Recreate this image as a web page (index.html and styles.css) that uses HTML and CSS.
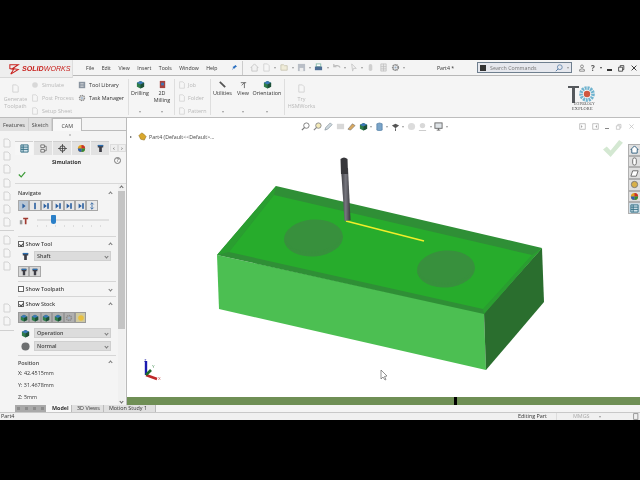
FILE: index.html
```html
<!DOCTYPE html>
<html lang="en">
<head>
<meta charset="utf-8">
<title>SOLIDWORKS CAM Simulation</title>
<link rel="stylesheet" href="styles.css">
</head>
<body>
<svg class="defs" width="0" height="0">
  <symbol id="page" viewBox="0 0 10 10"><path d="M2 1h4l2 2v6H2z" fill="#f6f6f6" stroke="#d2d2d2"/></symbol>
  <symbol id="gear" viewBox="0 0 10 10"><circle cx="5" cy="5" r="3" fill="none" stroke="#8a8a8a" stroke-width="2" stroke-dasharray="1.500 .6"/><circle cx="5" cy="5" r="1.200" fill="#9ab0c8"/></symbol>
  <symbol id="cube" viewBox="0 0 10 10"><path d="M5 1l4 2v4.500L5 9.500 1 7.500V3z" fill="#2f7d4a"/><path d="M5 1l4 2-4 2-4-2z" fill="#3c78b8"/><path d="M5 5l4-2v4.500L5 9.500z" fill="#1e4f38"/></symbol>
  <symbol id="navb" viewBox="0 0 10 10"><path d="M2 2l4 3-4 3z" fill="#2a5fa0"/><rect x="6.500" y="1.500" width="2" height="7" fill="#2a5fa0"/></symbol>
  <symbol id="tool" viewBox="0 0 10 10"><path d="M2 1h6v3H6.500v5h-3V4H2z" fill="#3d3d45"/><path d="M2 1h6v1.500H2z" fill="#2c6fb0"/></symbol>
  <symbol id="ball" viewBox="0 0 10 10"><circle cx="5" cy="5" r="4" fill="#e0a020"/><path d="M5 1a4 4 0 0 1 4 4H5z" fill="#c8302a"/><path d="M5 5h4a4 4 0 0 1-4 4z" fill="#2f8a3c"/><path d="M5 5v4a4 4 0 0 1-4-4z" fill="#2c5fb0"/></symbol>
</svg>
<div class="app">
  <header class="titlebar">
    <div class="logo"><svg class="logo-mark" viewBox="0 0 14 14"><path d="M2 3h9L5 7l6 1-8 5 3-5-4-1z" fill="none" stroke="#c8201c" stroke-width="1.100"/></svg><span class="logo-solid">SOLID</span><span class="logo-works">WORKS</span></div>
    <nav class="menu"><span>File</span><span>Edit</span><span>View</span><span>Insert</span><span>Tools</span><span>Window</span><span>Help</span><svg class="pin" viewBox="0 0 8 8"><path d="M6 0l2 2-2 1-1 2-1-1-3 3 2-3.500-1-1 2-1z" fill="#2a6fc0"/></svg></nav>
    <div class="quick">
      <svg class="qi" viewBox="0 0 10 10"><path d="M1 5l4-4 4 4H8v4H2V5z" fill="#f2f2f2" stroke="#c6c6c6"/></svg>
      <svg class="qi"><use href="#page"/></svg><i class="drop"></i>
      <svg class="qi" viewBox="0 0 10 10"><path d="M1 8V2h3l1 1h3v5z" fill="#f0ecd8" stroke="#c9c6b4"/></svg><i class="drop"></i>
      <svg class="qi" viewBox="0 0 10 10"><rect x="1" y="1" width="8" height="8" fill="#b9bec6"/><rect x="3" y="5.500" width="4" height="3.500" fill="#eee"/></svg><i class="drop"></i>
      <svg class="qi" viewBox="0 0 10 10"><rect x="2.500" y="1" width="5" height="3" fill="#fff" stroke="#8ba"/><rect x="1" y="4" width="8" height="4" fill="#4d6d94"/></svg><i class="drop"></i>
      <svg class="qi" viewBox="0 0 10 10"><path d="M2 4a4 3 0 0 1 7 1M2 1v3h3" fill="none" stroke="#bcbcbc" stroke-width="1.300"/></svg><i class="drop"></i>
      <svg class="qi" viewBox="0 0 10 10"><path d="M3 1l5 5H5l-1 3z" fill="#f4f4f4" stroke="#c6c6c6"/></svg><i class="drop"></i>
      <svg class="qi" viewBox="0 0 10 10"><rect x="3" y="1" width="4" height="8" rx="2" fill="#cfcfcf"/></svg>
      <svg class="qi" viewBox="0 0 10 10"><path d="M2 1h6v8H2zM2 4h6M2 6.500h6M5 1v8" fill="#e8e8e8" stroke="#bdbdbd" stroke-width=".8"/></svg>
      <svg class="qi"><use href="#gear"/></svg><i class="drop"></i>
    </div>
    <span class="docname">Part4 *</span>
    <div class="search"><span class="search-icon"></span><span class="search-text">Search Commands</span><svg class="lens" viewBox="0 0 10 10"><circle cx="6" cy="4" r="3" fill="none" stroke="#5b7fa8"/><path d="M4 6L1 9" stroke="#5b7fa8" stroke-width="1.200"/></svg><i class="drop"></i></div>
    <div class="winctl">
      <svg class="wi" viewBox="0 0 10 10"><circle cx="5" cy="3" r="1.800" fill="none" stroke="#777"/><path d="M2 9V7q3-2 6 0v2z" fill="none" stroke="#777"/></svg>
      <span class="help">?</span><i class="drop dark"></i>
      <span class="dash"></span>
      <svg class="wi" viewBox="0 0 10 10"><path d="M2 4h5v5H2zM4 4V2h4.500v5H7" fill="none" stroke="#333"/></svg>
      <svg class="wi" viewBox="0 0 10 10"><path d="M2 2l6 6M8 2l-6 6" stroke="#333" stroke-width="1.200"/></svg>
    </div>
  </header>

  <section class="ribbon">
    <div class="rb-group g-gen">
      <div class="rb-big off"><svg class="rb-ico"><use href="#page"/></svg><span>Generate<br>Toolpath</span></div>
      <div class="rb-list l-sim off">
        <span><svg class="ri" viewBox="0 0 10 10"><circle cx="5" cy="5" r="3.500" fill="#d8d8d8"/></svg>Simulate</span>
        <span><svg class="ri"><use href="#page"/></svg>Post Process</span>
        <span><svg class="ri"><use href="#page"/></svg>Setup Sheet</span>
      </div>
      <div class="rb-list l-lib">
        <span><svg class="ri" viewBox="0 0 10 10"><path d="M1 1h8v8H1z" fill="#8a94a0"/><path d="M3 3h4v1H3zM3 6h4v1H3z" fill="#eee"/></svg>Tool Library</span>
        <span><svg class="ri"><use href="#gear"/></svg>Task Manager</span>
      </div>
    </div>
    <div class="rb-group g-op">
      <div class="rb-tall w22"><svg class="rb-ico"><use href="#cube"/></svg><span>Drilling</span><i class="drop"></i></div>
      <div class="rb-tall w22"><svg class="rb-ico" viewBox="0 0 10 10"><path d="M2 1h6v8H2z" fill="#a8423e"/><path d="M3.500 3h3v3h-3z" fill="#3c78b8"/></svg><span>2D<br>Milling</span><i class="drop"></i></div>
    </div>
    <div class="rb-group g-job">
      <div class="rb-list l-job off">
        <span><svg class="ri"><use href="#page"/></svg>Job</span>
        <span><svg class="ri"><use href="#page"/></svg>Folder</span>
        <span><svg class="ri"><use href="#page"/></svg>Pattern</span>
      </div>
    </div>
    <div class="rb-group g-util">
      <div class="rb-tall w23"><svg class="rb-ico" viewBox="0 0 10 10"><path d="M2 2l6 6" stroke="#555" stroke-width="2"/></svg><span>Utilities</span><i class="drop"></i></div>
      <div class="rb-tall w18"><svg class="rb-ico" viewBox="0 0 10 10"><path d="M2 3h6M3 6l3-3v6" fill="none" stroke="#666"/></svg><span>View</span><i class="drop"></i></div>
      <div class="rb-tall w30"><svg class="rb-ico"><use href="#cube"/></svg><span>Orientation</span><i class="drop"></i></div>
    </div>
    <div class="rb-group g-hsm">
      <div class="rb-big off"><svg class="rb-ico"><use href="#page"/></svg><span>Try<br>HSMWorks</span></div>
    </div>
    <div class="brand">
      <svg class="brand-mark" viewBox="0 0 30 26">
        <path d="M0 1h11v2H7v15H4V3H0z" fill="#55585c"/>
        <circle cx="19" cy="9" r="6" fill="none" stroke="#6fb3cf" stroke-width="3.600" stroke-dasharray="2 .8"/>
        <circle cx="19" cy="9" r="3.200" fill="#d0573f"/>
      </svg>
      <span class="brand-a">ECHNOLOGY</span>
      <span class="brand-b">EXPLORE</span>
    </div>
  </section>

  <div class="main">
    <aside class="side">
      <div class="tabs">
        <span class="tab">Features</span><span class="tab">Sketch</span><span class="tab active">CAM</span>
      </div>
      <div class="grip"><i></i></div>
      <div class="side-body">
        <div class="rail">
          <svg class="rail-i"><use href="#page"/></svg><svg class="rail-i"><use href="#page"/></svg><svg class="rail-i"><use href="#page"/></svg><svg class="rail-i"><use href="#page"/></svg><svg class="rail-i"><use href="#page"/></svg><svg class="rail-i"><use href="#page"/></svg><svg class="rail-i"><use href="#page"/></svg>
          <b class="rail-sep"></b>
          <svg class="rail-i"><use href="#page"/></svg><svg class="rail-i"><use href="#page"/></svg><svg class="rail-i"><use href="#page"/></svg><b class="rail-gap"></b><svg class="rail-i"><use href="#page"/></svg><svg class="rail-i"><use href="#page"/></svg>
          <b class="rail-sep"></b>
        </div>
        <div class="pm">
          <div class="pm-tabs">
            <span class="pt on"><svg class="pt-i" viewBox="0 0 10 10"><path d="M1 1h8v8H1z" fill="#d6e6ee" stroke="#2e6a80"/><path d="M1 3.500h8M1 6h8M3.500 1v8" stroke="#2e6a80"/></svg></span>
            <span class="pt"><svg class="pt-i" viewBox="0 0 10 10"><path d="M2 1h4v3H2zM2 6h4v3H2zM6 2.500h2v5H6" fill="#eee" stroke="#555" stroke-width=".8"/></svg></span>
            <span class="pt"><svg class="pt-i" viewBox="0 0 10 10"><circle cx="5" cy="5" r="3" fill="none" stroke="#333"/><path d="M5 0v10M0 5h10" stroke="#333" stroke-width=".8"/></svg></span>
            <span class="pt"><svg class="pt-i"><use href="#ball"/></svg></span>
            <span class="pt"><svg class="pt-i"><use href="#tool"/></svg></span>
            <span class="pt-arrows"><i>‹</i><i>›</i></span>
          </div>
          <div class="pm-title"><span>Simulation</span><span class="q">?</span></div>
          <div class="ok"><svg class="ok-i" viewBox="0 0 10 8"><path d="M1 4l3 3 5-6" fill="none" stroke="#3a9a35" stroke-width="1.500"/></svg></div>
          <div class="pm-scroll">
            <div class="pm-col">
              <section class="sec s-nav">
                <h3>Navigate<i class="up"></i></h3>
                <div class="iconrow">
                  <span class="ib first"><svg viewBox="0 0 10 10"><path d="M3 2l4 3-4 3z" fill="#2a5fa0"/></svg></span>
                  <span class="ib"><svg viewBox="0 0 10 10"><rect x="4" y="1" width="2" height="8" fill="#2a5fa0"/></svg></span>
                  <span class="ib"><svg><use href="#navb"/></svg></span><span class="ib"><svg><use href="#navb"/></svg></span><span class="ib"><svg><use href="#navb"/></svg></span><span class="ib"><svg><use href="#navb"/></svg></span><span class="ib"><svg viewBox="0 0 10 10"><path d="M5 1v8M3 3l2-2 2 2M3 7l2 2 2-2" fill="none" stroke="#2a5fa0"/></svg></span>
                </div>
                <div class="sliderrow">
                  <svg class="st" viewBox="0 0 12 10"><path d="M1 4h3v5H1z" fill="#9a9a9a"/><path d="M5 1h6v2H9v6H7V3H5z" fill="#a03a30"/></svg>
                  <div class="track"><span class="thumb"></span><span class="ticks"></span></div>
                </div>
              </section>
              <section class="sec s-tool">
                <h3><span class="cb on"></span>Show Tool<i class="up"></i></h3>
                <div class="selrow"><svg class="sel-i"><use href="#tool"/></svg><span class="sel">Shaft<i class="down"></i></span></div>
                <div class="iconrow"><span class="ib wide"><svg><use href="#tool"/></svg></span><span class="ib wide"><svg><use href="#tool"/></svg></span></div>
              </section>
              <section class="sec s-path">
                <h3><span class="cb"></span>Show Toolpath<i class="down"></i></h3>
              </section>
              <section class="sec s-stock">
                <h3><span class="cb on"></span>Show Stock<i class="up"></i></h3>
                <div class="iconrow">
                  <span class="ib g"><svg><use href="#cube"/></svg></span><span class="ib g"><svg><use href="#cube"/></svg></span><span class="ib g"><svg><use href="#cube"/></svg></span><span class="ib g"><svg><use href="#cube"/></svg></span>
                  <span class="ib g"><svg><use href="#gear"/></svg></span><span class="ib y"><svg viewBox="0 0 10 10"><circle cx="5" cy="5" r="3.500" fill="#e8c040"/></svg></span>
                </div>
                <div class="selrow"><svg class="sel-i"><use href="#cube"/></svg><span class="sel">Operation<i class="down"></i></span></div>
                <div class="selrow"><svg class="sel-i" viewBox="0 0 10 10"><circle cx="5" cy="5" r="4.500" fill="#6d6f70"/></svg><span class="sel">Normal<i class="down"></i></span></div>
              </section>
              <section class="sec s-pos">
                <h3>Position<i class="up"></i></h3>
                <p>X: 42.4515mm</p>
                <p>Y: 31.4678mm</p>
                <p>Z: 5mm</p>
              </section>
            </div>
            <div class="sb"><i class="sb-up"></i><span class="sb-thumb"></span><i class="sb-down"></i></div>
          </div>
        </div>
      </div>
    </aside>
    <div class="collapse"></div>
    <main class="viewport">
      <div class="canvas">
        <div class="tree"><i class="tri"></i><svg class="tree-i" viewBox="0 0 10 10"><path d="M1 4l3-3 2 1 3 3-2 4-4-1z" fill="#d9a72c" stroke="#8a6a18" stroke-width=".6"/></svg><span>Part4  (Default&lt;&lt;Default&gt;...</span></div>
        <div class="hud">
          <svg class="hi" viewBox="0 0 10 10"><circle cx="6" cy="4" r="3" fill="none" stroke="#777"/><path d="M4 6L1 9" stroke="#777" stroke-width="1.400"/></svg>
          <svg class="hi" viewBox="0 0 10 10"><circle cx="6" cy="4" r="3" fill="#f3e9b8" stroke="#888"/><path d="M4 6L1 9" stroke="#888" stroke-width="1.400"/></svg>
          <svg class="hi" viewBox="0 0 10 10"><path d="M1 9l3-1 5-5-2-2-5 5z" fill="#cfd9df" stroke="#7a8a94" stroke-width=".7"/></svg>
          <svg class="hi" viewBox="0 0 10 10"><rect x="1" y="2" width="8" height="6" fill="#d8d8d8"/></svg>
          <svg class="hi" viewBox="0 0 10 10"><path d="M1 8l5-6 3 2-5 5z" fill="#d8a860" stroke="#666" stroke-width=".6"/></svg>
          <svg class="hi"><use href="#cube"/></svg><i class="drop"></i>
          <svg class="hi" viewBox="0 0 10 10"><path d="M2 2l3-1 3 1v7l-3 1-3-1z" fill="#7aa4c8" stroke="#3a6a94" stroke-width=".6"/></svg><i class="drop"></i>
          <svg class="hi" viewBox="0 0 10 10"><path d="M1 4l4-2 4 2-4 3z" fill="#555"/><path d="M5 7v3" stroke="#555"/></svg><i class="drop"></i>
          <svg class="hi" viewBox="0 0 10 10"><circle cx="5" cy="5" r="4" fill="#dcdcdc"/></svg>
          <svg class="hi" viewBox="0 0 10 10"><circle cx="5" cy="4" r="3" fill="#d8d8d8"/><path d="M1 9h8v1H1z" fill="#c8c8c8"/></svg><i class="drop"></i>
          <svg class="hi" viewBox="0 0 10 10"><rect x="1" y="1" width="8" height="6" fill="#dfe4e8" stroke="#666"/><path d="M3 9h4M5 7v2" stroke="#666"/></svg><i class="drop"></i>
        </div>
        <div class="docctl">
          <svg class="dc" viewBox="0 0 10 10"><path d="M1 1h8v8H1z" fill="none" stroke="#aaa"/><path d="M3 3l2 2-2 2z" fill="#999"/></svg>
          <svg class="dc" viewBox="0 0 10 10"><path d="M1 1h8v8H1z" fill="none" stroke="#aaa"/><path d="M7 3L5 5l2 2z" fill="#999"/></svg>
          <span class="dc-min"></span>
          <svg class="dc" viewBox="0 0 10 10"><path d="M2 4h5v5H2zM4 4V2h4.500v5H7" fill="none" stroke="#bbb"/></svg>
          <svg class="dc" viewBox="0 0 10 10"><path d="M2 2l6 6M8 2l-6 6" stroke="#bbb"/></svg>
        </div>
        <svg class="confirm" viewBox="0 0 22 20"><path d="M1 11l4-3 4 4 9-11 4 3-13 15z" fill="#d4e8d2"/></svg>
        <div class="taskpane">
          <span class="tp"><svg viewBox="0 0 10 10"><path d="M1 5l4-4 4 4H8v4H2V5z" fill="#fff" stroke="#2a5a7a"/></svg></span>
          <span class="tp"><svg viewBox="0 0 10 10"><rect x="3" y="1" width="4" height="8" rx="2" fill="#fff" stroke="#666"/></svg></span>
          <span class="tp"><svg viewBox="0 0 10 10"><path d="M1 8l2-6h6L7 8z" fill="#fff" stroke="#666"/></svg></span>
          <span class="tp"><svg viewBox="0 0 10 10"><circle cx="5" cy="5" r="3.500" fill="#d8b048" stroke="#777"/></svg></span>
          <span class="tp"><svg><use href="#ball"/></svg></span>
          <span class="tp on"><svg viewBox="0 0 10 10"><path d="M1 1h8v8H1z" fill="#d6e6ee" stroke="#2e6a80"/><path d="M1 3.500h8M1 6h8M3.500 1v8" stroke="#2e6a80"/></svg></span>
        </div>
        <svg class="scene" viewBox="0 0 513 279">
          <defs>
            <linearGradient id="shank" x1="0" x2="1" y1="0" y2="0"><stop offset="0" stop-color="#3b3b40"/><stop offset=".5" stop-color="#77777f"/><stop offset="1" stop-color="#36363a"/></linearGradient>
          </defs>
          <g transform="translate(-127 -118)">
            <path d="M217 255L484 313L486 370L219 309Z" fill="#4cbf52"/>
            <path d="M484 313L542 248L544 302L486 370Z" fill="#2a6e2e"/>
            <path d="M276 186L542 248L484 314L217 255Z" fill="#2f8f36"/>
            <path d="M276 186L274 195L229 252L217 255Z" fill="#2a9e30"/>
            <path d="M542 248L532 255L483 309L484 314Z" fill="#2a9e30"/>
            <path d="M274 195L532 255L483 309L229 252Z" fill="#27ac2c"/>
            <ellipse cx="313.500" cy="238" rx="29.500" ry="18.500" transform="rotate(-4 313.500 238)" fill="#38903d"/>
            <ellipse cx="446" cy="269" rx="29" ry="18.500" transform="rotate(-4 446 269)" fill="#38903d"/>
            <path d="M285 241A29.500 18.500 -4 0 0 342 236" fill="none" stroke="#38903d" stroke-width="2" stroke-dasharray="1.500 1.500"/>
            <path d="M418 272A29 18.500 -4 0 0 474 268" fill="none" stroke="#38903d" stroke-width="2" stroke-dasharray="1.500 1.500"/>
            <path d="M346 221L424 241" stroke="#f1ee2a" stroke-width="1.600"/>
            <path d="M341 168L348 168L350.500 220L344.500 221Z" fill="url(#shank)"/>
            <path d="M340.500 159q3.500-3 7 0L348 174L341 174Z" fill="#37373b"/>
            <path d="M381 370v9l2-2 2 3 1-.5-1.500-3 2.500-.5z" fill="#fff" stroke="#666" stroke-width=".7"/>
            <path d="M146 361V375" stroke="#1a1ab0" stroke-width="2.400"/>
            <path d="M146 375L157 379" stroke="#c02828" stroke-width="2.400"/>
            <path d="M146 375L151 370" stroke="#1f6a2a" stroke-width="2.600"/>
          </g>
          <text class="axis" x="17" y="244" fill="#2a2ab0">Z</text>
          <text class="axis" x="25" y="250" fill="#3a8a4a">Y</text>
          <text class="axis" x="31" y="262" fill="#c04040">X</text>
        </svg>
      </div>
      <div class="band"><i></i></div>
    </main>
  </div>

  <div class="bottomtabs">
    <div class="scrollbtns"><i></i><i></i><i></i><i></i></div>
    <span class="bt active">Model</span><span class="bt">3D Views</span><span class="bt last">Motion Study 1</span>
  </div>
  <footer class="status">
    <span class="st-part">Part4</span>
    <span class="st-edit">Editing Part</span>
    <span class="st-unit">MMGS</span><i class="drop"></i>
    <svg class="st-end" viewBox="0 0 10 10"><rect x="1" y="1" width="6" height="8" fill="none" stroke="#777"/></svg>
  </footer>
</div>
</body>
</html>
```

FILE: styles.css
```css
* { box-sizing: border-box; }
html, body { margin: 0; height: 100%; background: #000; overflow: hidden; }
body { font-family: "Open Sans", "Liberation Sans", sans-serif; font-size: 5.400px; color: #333; }
.defs { position: absolute; }
svg { display: block; flex: none; }
i { font-style: normal; }
.app { margin-top: 60px; height: 360px; display: flex; flex-direction: column; background: #f2f2f2; overflow: hidden; filter: blur(.3px); }
.drop { width: 0; height: 0; border-left: 1.500px solid transparent; border-right: 1.500px solid transparent; border-top: 2px solid #999; display: block; flex: none; }
.drop.dark { border-top-color: #444; }

.titlebar { height: 16px; flex: none; display: flex; align-items: center; background: #f4f4f4; border-bottom: 1px solid #b8b8b8; position: relative; }
.logo { position: absolute; left: 0; top: 0; width: 73px; height: 18px; background: #eee; border-right: 1px solid #ddd; border-bottom: 1px solid #d8d8d8; display: flex; align-items: center; padding-left: 8px; font: italic 700 7.100px "Liberation Sans", sans-serif; color: #c8201c; z-index: 1; }
.logo-mark { width: 13px; height: 13px; margin-right: 1px; }
.logo-works { font-weight: 400; }
.menu { margin-left: 86px; display: flex; gap: 7.500px; align-items: center; font-size: 5.200px; width: 156px; }
.menu .pin { width: 6px; height: 6px; margin-left: 6px; }
.quick { display: flex; align-items: center; gap: 3.200px; border-left: 1px solid #ccc; padding-left: 7px; width: 175px; height: 14px; }
.qi { width: 9px; height: 9px; }
.docname { width: 50px; font-size: 5.200px; margin-left: 20px; }
.search { width: 95px; height: 11px; margin-left: -10px; border: 1px solid #6f7f8f; background: #e6e8ee; display: flex; align-items: center; padding: 0 2px; gap: 4px; color: #777; }
.search-icon { width: 6px; height: 6px; background: #333; }
.search-text { flex: 1; font-size: 5.300px; }
.lens { width: 8px; height: 8px; }
.winctl { display: flex; align-items: center; gap: 5px; margin-left: 6px; }
.wi { width: 8px; height: 8px; }
.help { font-size: 8px; font-weight: 700; color: #555; line-height: 8px; }
.dash { width: 5px; height: 1.500px; background: #333; margin-top: 5px; }

.ribbon { height: 42px; flex: none; display: flex; background: #f5f5f5; border-bottom: 1px solid #bdbdbd; color: #333; padding-top: 3px; position: relative; }
.rb-group { display: flex; height: 36px; border-right: 1px solid #dedede; }
.g-gen { width: 129px; padding-left: 2px; }
.g-op { width: 46px; }
.g-job { width: 36px; }
.g-util { width: 74px; }
.g-hsm { width: 32px; border-right: 0; padding-left: 3px; }
.rb-big { width: 27px; display: flex; flex-direction: column; align-items: center; text-align: center; line-height: 6.500px; padding-top: 5px; gap: 3px; }
.rb-tall { display: flex; flex-direction: column; align-items: center; text-align: center; line-height: 7px; padding-top: 1px; }
.rb-tall span { height: 21px; margin-top: 1px; white-space: nowrap; }
.w18 { width: 18px; }
.w22 { width: 22px; }
.w23 { width: 23px; }
.w30 { width: 30px; }
.rb-ico { width: 9px; height: 9px; }
.rb-list { display: flex; flex-direction: column; gap: 7px; padding-top: 3px; line-height: 6px; }
.rb-list span { display: flex; align-items: center; white-space: nowrap; height: 6px; }
.l-sim { width: 48px; padding-left: 2px; }
.l-sim span { gap: 3px; }
.l-lib { width: 50px; padding-left: 1px; }
.l-lib span { gap: 3px; }
.l-job { padding-left: 3px; }
.l-job span { gap: 2px; }
.ri { width: 8px; height: 8px; }
.off { color: #b8b8b8; }
.brand { position: absolute; left: 568px; top: 10px; width: 30px; height: 25px; font: 3.300px "Liberation Serif", serif; color: #444; }
.brand-mark { width: 30px; height: 26px; position: absolute; left: 0; top: -1px; }
.brand-a { position: absolute; left: 6px; top: 16px; }
.brand-b { position: absolute; left: 4px; top: 20px; font-size: 4.300px; letter-spacing: .2px; }

.main { flex: 1; min-height: 0; display: flex; }
.side { width: 126px; flex: none; display: flex; flex-direction: column; background: #f4f4f4; }
.tabs { height: 13px; display: flex; flex: none; border-bottom: 1px solid #bbb; }
.tab { height: 13px; padding: 3px 3px 0; background: #e0e0e0; border-right: 1px solid #cfcfcf; color: #444; }
.tab.active { background: #f8f8f8; padding: 3px 8px 0; border: 1px solid #bbb; border-bottom: 0; }
.grip { height: 7px; flex: none; display: flex; justify-content: center; align-items: center; }
.grip i { width: 2px; height: 2px; background: #bbb; border-radius: 50%; margin-left: 14px; }
.side-body { flex: 1; min-height: 0; display: flex; }
.rail { width: 15px; flex: none; display: flex; flex-direction: column; gap: 3.200px; padding: 0 0 0 2px; }
.rail-i { width: 10px; height: 10px; }
.rail-sep { height: 1px; background: #d0d0d0; margin: 0 -2px; width: 14px; }
.rail-gap { height: 26px; }
.pm { flex: 1; min-width: 0; display: flex; flex-direction: column; }
.pm-tabs { display: flex; align-items: center; height: 14px; margin-top: 3px; flex: none; }
.pt { width: 18px; height: 14px; background: #e2e2e2; margin-right: 1px; display: flex; align-items: center; justify-content: center; border-top: 1px solid #d0d0d0; }
.pt.on { background: #f6f6f6; }
.pt-i { width: 9px; height: 9px; }
.pt-arrows { display: flex; margin-left: 0; font-size: 6px; }
.pt-arrows i { width: 8px; text-align: center; height: 8px; line-height: 6px; background: #eee; border: 1px solid #ddd; }
.pm-title { height: 13px; flex: none; display: flex; align-items: center; justify-content: center; font-weight: 700; position: relative; padding-right: 8px; }
.q { position: absolute; right: 5px; top: 2px; width: 7px; height: 7px; border: 1px solid #777; border-radius: 50%; font-size: 5px; line-height: 5px; text-align: center; font-weight: 400; }
.ok { height: 16px; flex: none; padding: 3px 0 0 3px; border-bottom: 1px solid #d8d8d8; }
.ok-i { width: 8px; height: 7px; }
.pm-scroll { flex: 1; min-height: 0; display: flex; }
.pm-col { flex: 1; min-width: 0; padding: 0 2px 0 3px; overflow: hidden; }
.sec { border-bottom: 1px solid #d6d6d6; }
.sec:last-child { border-bottom: 0; }
.sec h3 { margin: 0; font-size: 5.400px; font-weight: 600; display: flex; align-items: center; height: 8px; color: #444; }
.up, .down { margin-left: auto; width: 3px; height: 3px; border-left: 1px solid #777; border-top: 1px solid #777; transform: rotate(45deg); margin-right: 4px; }
.down { transform: rotate(225deg); }
.s-nav { height: 53px; padding-top: 5px; }
.s-tool { height: 45px; padding-top: 3px; }
.s-path { height: 15px; padding-top: 3px; }
.s-stock { height: 59px; padding-top: 3px; }
.s-pos { padding-top: 2px; }
.s-pos p { margin: 0; height: 12px; line-height: 12px; }
.s-pos h3 { height: 9px; }
.iconrow { display: flex; margin-top: 3px; }
.ib { width: 11.400px; height: 11px; background: #e8e8e8; border: 1px solid #a8a8a8; display: flex; align-items: center; justify-content: center; }
.ib svg { width: 8px; height: 8px; }
.ib.first { background: #b9c6d4; }
.ib.wide { background: #d8d8d8; }
.ib.g { background: #b0b0b0; border-color: #999; }
.ib.y { background: #cfc9a0; border-color: #999; }
.sliderrow { display: flex; align-items: center; margin-top: 3px; gap: 8px; }
.st { width: 10px; height: 10px; margin-left: 1px; }
.track { position: relative; width: 72px; height: 14px; }
.track::before { content: ""; position: absolute; left: 0; right: 0; top: 5px; height: 2px; background: #e0e0e0; }
.thumb { position: absolute; left: 14px; top: 1px; width: 5px; height: 9px; background: #2a7fc8; border-radius: 1px 1px 3px 3px; }
.ticks { position: absolute; left: 0; right: 0; top: 11px; height: 2px; background: repeating-linear-gradient(90deg, #ddd 0 1px, transparent 1px 9px); }
.cb { width: 6px; height: 6px; border: 1px solid #666; background: #fff; display: block; flex: none; margin-right: 1.500px; position: relative; }
.cb.on::after { content: ""; position: absolute; left: .8px; top: 0; width: 1.500px; height: 3px; border: solid #444; border-width: 0 1px 1px 0; transform: rotate(40deg); }
.selrow { display: flex; align-items: center; gap: 4px; margin-top: 3px; padding-left: 3px; margin-right: 5px; }
.sel-i { width: 9px; height: 9px; }
.sel { flex: 1; height: 10px; background: #dcdcdc; border: 1px solid #cfcfcf; display: flex; align-items: center; padding-left: 2px; font-weight: 600; color: #444; }
.sel .down { margin-right: 2px; }
.s-tool .iconrow { margin-top: 5px; }
.s-stock .iconrow { margin-top: 4px; }
.s-stock .iconrow + .selrow { margin-top: 5px; }
.sb { width: 7px; flex: none; background: #f0f0f0; margin-right: 1px; position: relative; padding-top: 7px; }
.sb-thumb { display: block; height: 138px; background: #c4c4c4; }
.sb-up, .sb-down { position: absolute; left: 2px; width: 3px; height: 3px; border-left: 1px solid #666; border-top: 1px solid #666; transform: rotate(45deg); top: 2px; }
.sb-down { top: auto; bottom: 2px; transform: rotate(225deg); }
.collapse { width: 1px; flex: none; background: #bbb; }

.viewport { flex: 1; min-width: 0; display: flex; flex-direction: column; }
.canvas { flex: 1; min-height: 0; background: #fff; position: relative; }
.band { height: 8px; flex: none; background: #6f8f55; display: flex; justify-content: center; padding-left: 143px; }
.band i { display: block; width: 3px; height: 8px; background: #000; }
.scene { position: absolute; left: 0; top: 0; width: 513px; height: 279px; }
.axis { font: 4px "Liberation Sans", sans-serif; }
.tree { position: absolute; left: 3px; top: 14px; display: flex; align-items: center; gap: 6px; color: #444; font-size: 5.300px; z-index: 1; }
.tri { width: 0; height: 0; border-left: 2px solid #555; border-top: 1.500px solid transparent; border-bottom: 1.500px solid transparent; }
.tree-i { width: 9px; height: 9px; margin-right: -4px; }
.hud { position: absolute; left: 174px; top: 4px; display: flex; align-items: center; gap: 2.500px; z-index: 1; }
.hi { width: 9px; height: 9px; }
.docctl { position: absolute; left: 452px; top: 5px; display: flex; align-items: center; gap: 6px; z-index: 1; }
.dc { width: 7px; height: 7px; }
.dc-min { width: 4px; height: 1.500px; background: #888; margin-top: 4px; }
.confirm { position: absolute; left: 475px; top: 21px; width: 21px; height: 19px; }
.taskpane { position: absolute; right: 0; top: 26px; width: 12px; display: flex; flex-direction: column; z-index: 1; }
.tp { height: 11.700px; background: #dfdfdf; border: 1px solid #b0b0b0; border-right: 0; display: flex; align-items: center; justify-content: center; }
.tp.on { background: #cfdde6; }
.tp svg { width: 9px; height: 9px; }

.bottomtabs { height: 7px; flex: none; display: flex; background: #f4f4f4; padding-left: 15px; color: #333; line-height: 7px; }
.scrollbtns { width: 31px; background: #a9a9a9; display: flex; justify-content: space-around; align-items: center; }
.scrollbtns i { width: 3px; height: 3px; background: #8c8c8c; }
.bt { padding: 0 0 0 5px; background: #e0e0e0; border-right: 1px solid #bbb; width: 32px; white-space: nowrap; }
.bt.active { background: #f8f8f8; font-weight: 700; width: 26px; padding-left: 6px; }
.bt.last { width: 52px; }
.status { height: 8px; flex: none; display: flex; align-items: center; background: #f0f0f0; border-top: 1px solid #c8c8c8; line-height: 7px; }
.st-part { margin-left: 1px; width: 517px; }
.st-edit { width: 39px; border-right: 1px solid #ddd; }
.st-unit { color: #aaa; margin-left: 16px; width: 26px; }
.st-end { width: 7px; height: 7px; margin-left: 32px; }
```
